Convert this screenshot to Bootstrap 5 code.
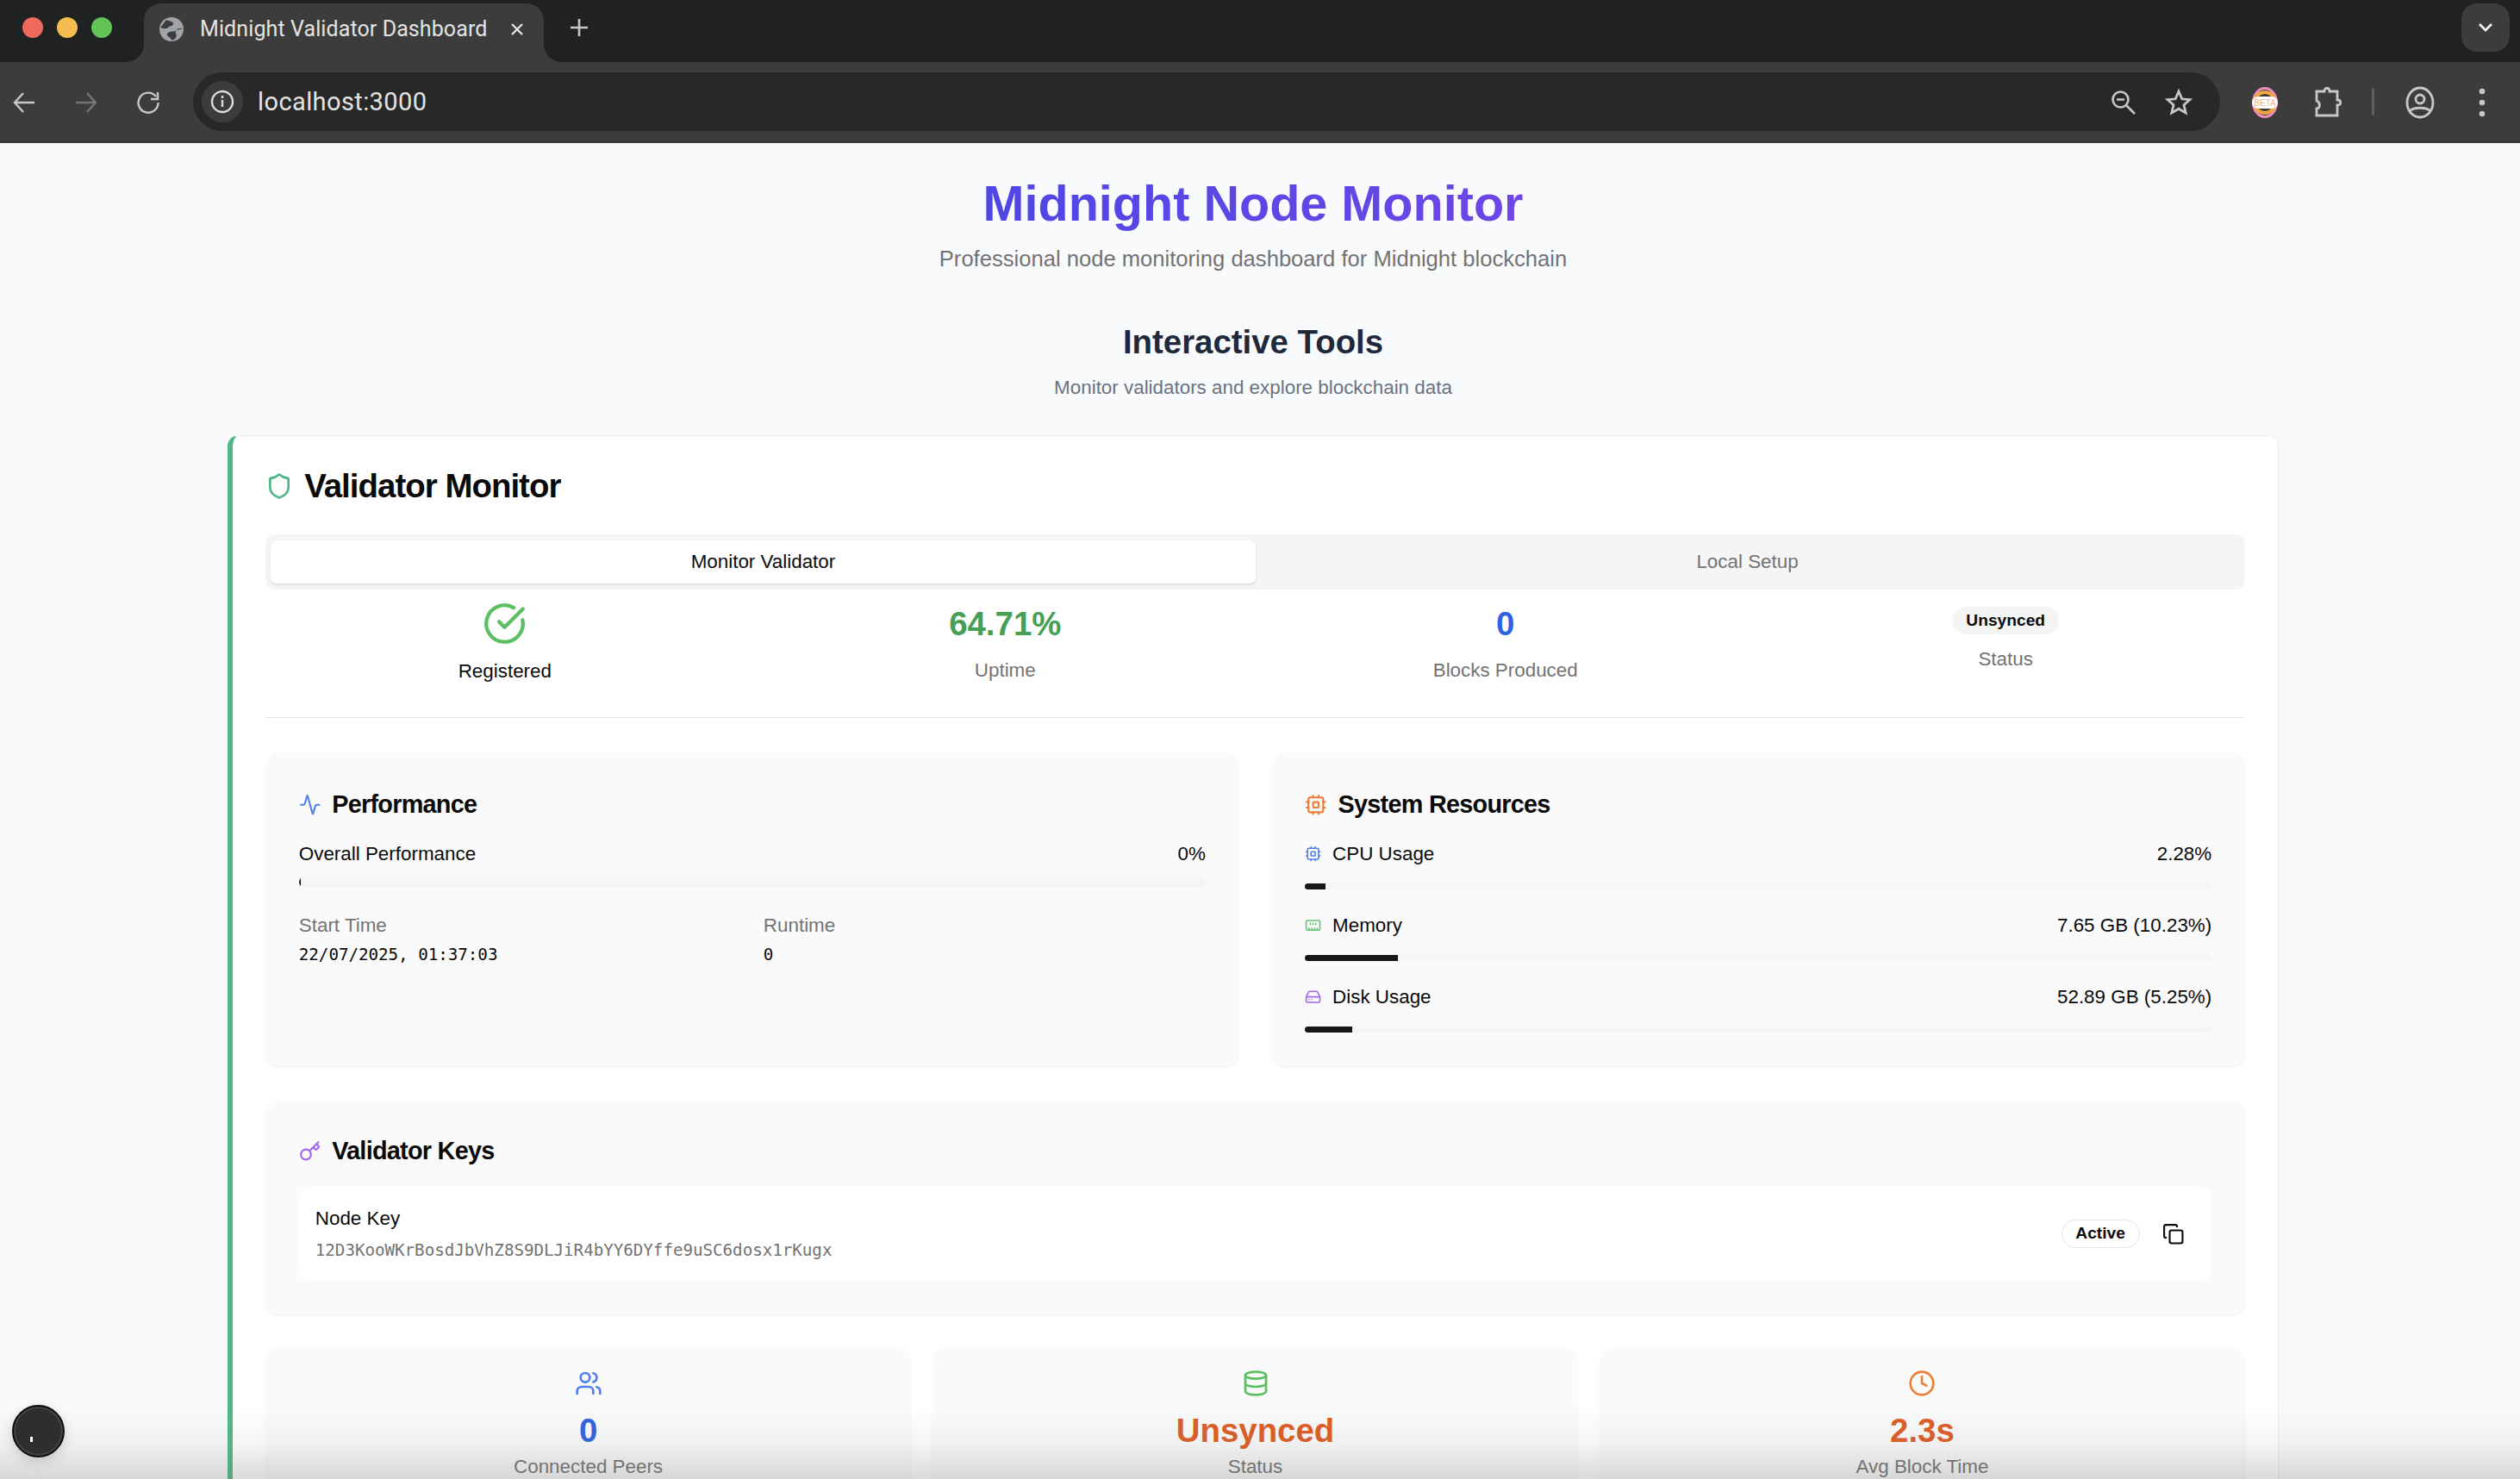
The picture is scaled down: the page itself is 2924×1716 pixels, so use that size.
<!DOCTYPE html>
<html lang="en">
<head>
<meta charset="utf-8">
<title>Midnight Validator Dashboard</title>
<link href="https://cdn.jsdelivr.net/npm/bootstrap@5.3.0/dist/css/bootstrap.min.css" rel="stylesheet">
<style>
html,body{height:1716px;overflow:hidden;margin:0}
body{font-family:"Liberation Sans",Arial,sans-serif;background:#f8fafc;color:#0a0a0a;font-size:22.4px;line-height:1.5}
.win{height:1716px;display:flex;flex-direction:column;position:relative;overflow:hidden}
/* browser chrome */
.strip{height:72px;background:#202221;flex:none;position:relative;font-family:Roboto,sans-serif}
.lights{padding-left:26px;gap:16px;height:64px}
.light{width:24px;height:24px;border-radius:50%}
.tabx{margin:4px 0 0 37px;width:464px;height:68px;background:#3c3c3c;border-radius:20px 20px 0 0;padding-left:18px;color:#e3e3e3;font-size:25px;position:relative}
.tabx::before,.tabx::after{content:"";position:absolute;bottom:0;width:20px;height:20px}
.tabx::before{left:-20px;background:radial-gradient(circle at 0 0,#202221 19.5px,#3c3c3c 20px)}
.tabx::after{right:-20px;background:radial-gradient(circle at 100% 0,#202221 19.5px,#3c3c3c 20px)}
.tabttl{margin-left:19px;white-space:nowrap;letter-spacing:.1px}
.dropbtn{position:absolute;right:12px;top:4px;width:56px;height:56px;border-radius:18px;background:#3c3c3c}
.tools{height:94px;background:#3c3c3c;flex:none;position:relative;font-family:Roboto,sans-serif;padding-left:4px}
.omni{position:absolute;left:224px;top:12px;width:2352px;height:68px;background:#282828;border-radius:34px;padding:0 10px}
.chip{width:48px;height:48px;border-radius:50%;background:#3c3c3c;flex:none}
.url{margin-left:17px;color:#e3e3e3;font-size:29px;letter-spacing:.4px;padding-top:1px}
.abs-ic{position:absolute;top:50%;transform:translate(-50%,-50%)}
.dv{position:absolute;left:2752px;top:30px;width:3px;height:32px;background:#5f5f5f;border-radius:2px}
/* page */
.pg{flex:1;overflow:hidden;background:#f8fafc;padding:0 280px 0 264px}
.h-top{text-align:center;padding-top:35px}
.brand{font-size:57.6px;line-height:70px;font-weight:700;margin:0;background:linear-gradient(90deg,#4f46e5,#6d47e6);-webkit-background-clip:text;background-clip:text;color:transparent;display:inline-block}
.sub{font-size:25.6px;line-height:38px;color:#737373;margin:10px 0 0}
.h2x{font-size:38.4px;line-height:50px;font-weight:700;color:#1e293b;margin:53px 0 0}
.sub2{font-size:22.4px;line-height:32px;color:#6b7280;margin:12px 0 0}
.mon{margin:39px 0 0 0;width:2380px;background:#fff;border:1.6px solid #e9ebee;border-left:6.4px solid #52b788;border-radius:12.8px 12.8px 0 0;padding:0 38.4px;height:1300px}
.mon-h{height:114px;gap:12.8px;padding-top:2px}
.ttl{font-size:38.4px;font-weight:700;letter-spacing:-.96px;margin:0;line-height:1}
.tabsx{height:64px;background:#f5f5f5;border-radius:10px;padding:7px 6px;font-size:22.4px}
.tabsx>div{flex:1 1 0;display:flex;align-items:center;justify-content:center;color:#737373;border-radius:7px}
.tabsx>.on{background:#fff;color:#0a0a0a;box-shadow:0 1.6px 3px rgba(0,0,0,.1)}
.stats{display:grid;grid-template-columns:repeat(4,1fr);gap:25.6px;height:149px;border-bottom:1.6px solid #e8e9eb;text-align:center}
.stat{padding-top:15px}
.bigv{font-size:38.4px;font-weight:700;line-height:48px}
.glab{font-size:22.4px;line-height:32px;color:#737373}
.pill{display:inline-block;background:#f5f5f5;border-radius:18px;font-size:19.2px;font-weight:700;line-height:24px;padding:4px 16px;color:#0a0a0a}
.pair{display:grid;grid-template-columns:1fr 1fr;gap:38.4px;margin-top:40px}
.pnl{background:#fafafa;border-radius:16px;box-shadow:0 1.6px 3px rgba(0,0,0,.05);padding:38.4px}
.pair .pnl{height:364px;padding-top:0}
.pnl-h{height:28.8px;line-height:28.8px;gap:12.8px;font-size:28.8px;font-weight:700;letter-spacing:-.72px;margin:0}
.pair .pnl-h{margin-top:46px}
.rw{font-size:22.4px;line-height:32px}
.trk{background:#f5f5f5;border-radius:7px;overflow:hidden}
.trk>div{background:#171717;height:100%}
.trk-a{height:12.8px}
.trk-b{height:7px}
.gl{color:#737373;line-height:32px}
.mono{font-family:"DejaVu Sans Mono","Liberation Mono",monospace;font-size:19.2px;letter-spacing:-.02px;line-height:28px}
.keybox{background:#fff;border-radius:12.8px;padding:0 19px;height:109px;margin-top:27px}
.act{border:1.6px solid #e5e5e5;border-radius:18px;font-size:19.2px;font-weight:700;height:33px;width:91px;display:flex;align-items:center;justify-content:center}
.tri{display:grid;grid-template-columns:repeat(3,1fr);gap:25.6px;margin-top:39px}
.tri .pnl{padding:23px 0 0;height:300px;text-align:center}
.shade{position:absolute;left:0;right:0;bottom:0;height:82px;background:linear-gradient(180deg,rgba(120,120,120,0),rgba(120,120,120,.08) 50%,rgba(110,110,110,.25));pointer-events:none}
.devb{position:absolute;left:14px;top:1630px;width:61px;height:61px;border-radius:50%;background:#2d2f2e;border:2px solid #0c0c0c;box-shadow:inset 0 0 0 2px #444,0 4px 14px rgba(0,0,0,.15)}
.devb::after{content:"";position:absolute;left:19px;top:35px;width:3px;height:6px;background:#fff}
svg.l{fill:none;stroke:currentColor;stroke-width:2;stroke-linecap:round;stroke-linejoin:round;flex:none}
.tx-grn{color:#52b788}.tx-blue{color:#4f7ff0}.tx-org{color:#ee7d35}.tx-pur{color:#a565f0}
</style>
</head>
<body>
<div class="win">
  <div class="strip d-flex">
    <div class="lights d-flex align-items-center">
      <div class="light" style="background:#ee6a5f"></div>
      <div class="light" style="background:#f5bd4f"></div>
      <div class="light" style="background:#61c454"></div>
    </div>
    <div class="tabx d-flex align-items-center" style="padding-bottom:9px">
      <svg width="28" height="28" viewBox="0 0 28 28" class="flex-none"><circle cx="14" cy="14" r="14" fill="#a0a4a8"/><path d="M8 3c3 2 7 1 8 4s-4 3-6 5-6 1-9 0M27 13c-4-1-7 0-8 3s2 5 0 8l-4 3c-2-2-3-4-5-5s-1-4 2-5 6 0 8-2" fill="#3c3c3c"/></svg>
      <span class="tabttl">Midnight Validator Dashboard</span>
      <svg class="ms-auto" style="margin-right:22px" width="18" height="18" viewBox="0 0 18 18" stroke="#e3e3e3" stroke-width="2.4"><path d="M3 3l12 12M15 3L3 15"/></svg>
    </div>
    <svg style="margin:21px 0 0 30px" width="22" height="22" viewBox="0 0 22 22" stroke="#c7c7c7" stroke-width="2.6"><path d="M11 1v20M1 11h20"/></svg>
    <div class="dropbtn d-flex align-items-center justify-content-center">
      <svg width="20" height="14" viewBox="0 0 20 14" fill="none" stroke="#f0f0f0" stroke-width="2.8"><path d="M3 3l7 7 7-7"/></svg>
    </div>
  </div>
  <div class="tools">
    <svg class="abs-ic" style="left:28px" width="28" height="28" viewBox="0 0 28 28" fill="none" stroke="#c7c7c7" stroke-width="2.4"><path d="M26 14H3M13 3L3 14l10 11"/></svg>
    <svg class="abs-ic" style="left:100px" width="28" height="28" viewBox="0 0 28 28" fill="none" stroke="#757575" stroke-width="2.4"><path d="M2 14h23M15 3l10 11-10 11"/></svg>
    <svg class="abs-ic" style="left:172px" width="28" height="28" viewBox="0 0 28 28" fill="none" stroke="#c7c7c7" stroke-width="2.4"><path d="M23 7a11.500 11.500 0 1 0 2.500 7"/><path d="M25 2v8h-8" stroke-linejoin="miter"/></svg>
    <div class="omni d-flex align-items-center">
      <div class="chip d-flex align-items-center justify-content-center">
        <svg width="28" height="28" viewBox="0 0 28 28" fill="none" stroke="#dedede" stroke-width="2.4"><circle cx="14" cy="14" r="12"/><path d="M14 12v8M14 7v3"/></svg>
      </div>
      <span class="url">localhost:3000</span>
    </div>
    <svg class="abs-ic" style="left:2464px" width="30" height="30" viewBox="0 0 30 30" fill="none" stroke="#c7c7c7" stroke-width="2.600"><circle cx="11.500" cy="11.500" r="9"/><path d="M18 18l10 10M7 11.500h9"/></svg>
    <svg class="abs-ic" style="left:2528px" width="32" height="32" viewBox="0 0 32 32" fill="none" stroke="#c7c7c7" stroke-width="2.800"><path d="M16 3l3.800 8.800 9.200.8-7 6.200 2.100 9.200L16 23.200 7.900 28l2.100-9.200-7-6.200 9.200-.8z"/></svg>
    <svg class="abs-ic" style="left:2628px" width="32" height="38" viewBox="0 0 32 38"><ellipse cx="16" cy="19" rx="15" ry="18" fill="#ee8fc0"/><ellipse cx="16" cy="19" rx="12" ry="15" fill="#3c3c3c"/><ellipse cx="16" cy="19" rx="12" ry="12" fill="none" stroke="#f0a63c" stroke-width="4"/><rect x="1" y="12" width="30" height="14" rx="7" fill="#fff"/><text x="16" y="23" font-size="10" text-anchor="middle" fill="#f5b08a" font-family="Liberation Sans">BETA</text></svg>
    <svg class="abs-ic" style="left:2702px" width="34" height="38" viewBox="0 0 34 38" fill="none" stroke="#c7c7c7" stroke-width="2.800"><path d="M3 6h9c0-5 6-5 6 0h9v10c5 0 5 6 0 6v12H3V26c4 0 5-7 0-9z"/></svg>
    <div class="dv"></div>
    <svg class="abs-ic" style="left:2808px" width="34" height="38" viewBox="0 0 34 38" fill="none" stroke="#c7c7c7" stroke-width="2.800"><ellipse cx="17" cy="19" rx="15" ry="17"/><circle cx="17" cy="15" r="5"/><path d="M5 29c4-5 20-5 24 0"/></svg>
    <svg class="abs-ic" style="left:2880px" width="8" height="34" viewBox="0 0 8 34" fill="#c7c7c7"><circle cx="4" cy="4" r="3.300"/><circle cx="4" cy="17" r="3.300"/><circle cx="4" cy="30" r="3.300"/></svg>
  </div>

  <div class="pg">
    <div class="h-top">
      <h1 class="brand">Midnight Node Monitor</h1>
      <p class="sub">Professional node monitoring dashboard for Midnight blockchain</p>
      <h2 class="h2x">Interactive Tools</h2>
      <p class="sub2">Monitor validators and explore blockchain data</p>
    </div>
    <div class="mon">
      <div class="mon-h d-flex align-items-center">
        <svg class="l tx-grn" width="32" height="32" viewBox="0 0 24 24"><path d="M20 13c0 5-3.500 7.500-7.660 8.950a1 1 0 0 1-.67-.01C7.500 20.500 4 18 4 13V6a1 1 0 0 1 1-1c2 0 4.500-1.200 6.240-2.720a1.170 1.170 0 0 1 1.520 0C14.510 3.810 17 5 19 5a1 1 0 0 1 1 1z"/></svg>
        <h3 class="ttl">Validator Monitor</h3>
      </div>
      <div class="tabsx d-flex">
        <div class="on">Monitor Validator</div>
        <div>Local Setup</div>
      </div>
      <div class="stats">
        <div class="stat" style="padding-top:14px">
          <svg class="l" style="color:#5cbf62" width="51" height="51" viewBox="0 0 24 24"><path d="M21.800 10A10 10 0 1 1 17 3.340"/><path d="m9 11 3 3L22 4"/></svg>
          <div class="rw" style="margin-top:14px;color:#0a0a0a">Registered</div>
        </div>
        <div class="stat" style="padding-top:16px">
          <div class="bigv" style="color:#469f57">64.71%</div>
          <div class="glab" style="margin-top:14px">Uptime</div>
        </div>
        <div class="stat" style="padding-top:16px">
          <div class="bigv" style="color:#2f63e0">0</div>
          <div class="glab" style="margin-top:14px">Blocks Produced</div>
        </div>
        <div class="stat" style="padding-top:18px">
          <span class="pill">Unsynced</span>
          <div class="glab" style="margin-top:13px">Status</div>
        </div>
      </div>

      <div class="pair">
        <div class="pnl">
          <div class="pnl-h d-flex align-items-center">
            <svg class="l tx-blue" width="25.600" height="25.600" viewBox="0 0 24 24"><path d="M22 12h-2.480a2 2 0 0 0-1.930 1.460l-2.350 8.360a.25.25 0 0 1-.48 0L9.240 2.180a.25.25 0 0 0-.48 0l-2.350 8.360A2 2 0 0 1 4.490 12H2"/></svg>
            <span>Performance</span>
          </div>
          <div class="rw d-flex justify-content-between" style="margin-top:27px"><span>Overall Performance</span><span>0%</span></div>
          <div class="trk trk-a" style="margin-top:10px"><div style="width:2px"></div></div>
          <div class="row g-0" style="margin-top:28px">
            <div class="col-6">
              <div class="gl">Start Time</div>
              <div class="mono" style="margin-top:4px">22/07/2025, 01:37:03</div>
            </div>
            <div class="col-6" style="padding-left:13px">
              <div class="gl">Runtime</div>
              <div class="mono" style="margin-top:4px">0</div>
            </div>
          </div>
        </div>
        <div class="pnl">
          <div class="pnl-h d-flex align-items-center">
            <svg class="l tx-org" width="25.600" height="25.600" viewBox="0 0 24 24"><rect x="4" y="4" width="16" height="16" rx="2"/><rect x="9" y="9" width="6" height="6" rx="1"/><path d="M15 2v2M15 20v2M2 15h2M2 9h2M20 15h2M20 9h2M9 2v2M9 20v2"/></svg>
            <span>System Resources</span>
          </div>
          <div class="rw d-flex justify-content-between align-items-center" style="margin-top:27px">
            <span class="d-flex align-items-center" style="gap:12.800px"><svg class="l tx-blue" width="19.200" height="19.200" viewBox="0 0 24 24"><rect x="4" y="4" width="16" height="16" rx="2"/><rect x="9" y="9" width="6" height="6" rx="1"/><path d="M15 2v2M15 20v2M2 15h2M2 9h2M20 15h2M20 9h2M9 2v2M9 20v2"/></svg>CPU Usage</span><span>2.28%</span>
          </div>
          <div class="trk trk-b" style="margin-top:18px"><div style="width:2.28%"></div></div>
          <div class="rw d-flex justify-content-between align-items-center" style="margin-top:26px">
            <span class="d-flex align-items-center" style="gap:12.800px"><svg class="l" style="color:#62c27a" width="19.200" height="19.200" viewBox="0 0 24 24"><path d="M6 19v-3M10 19v-3M14 19v-3M18 19v-3M8 11V9M16 11V9M12 11V9"/><path d="M22 15v-2a2 2 0 0 1 0-2V7a2 2 0 0 0-2-2H4a2 2 0 0 0-2 2v4a2 2 0 0 1 0 2v4a2 2 0 0 0 2 2h16a2 2 0 0 0 2-2z"/></svg>Memory</span><span>7.65 GB (10.23%)</span>
          </div>
          <div class="trk trk-b" style="margin-top:18px"><div style="width:10.23%"></div></div>
          <div class="rw d-flex justify-content-between align-items-center" style="margin-top:26px">
            <span class="d-flex align-items-center" style="gap:12.800px"><svg class="l tx-pur" width="19.200" height="19.200" viewBox="0 0 24 24"><path d="M22 12H2M5.450 5.110 2 12v6a2 2 0 0 0 2 2h16a2 2 0 0 0 2-2v-6l-3.450-6.890A2 2 0 0 0 16.760 4H7.240a2 2 0 0 0-1.790 1.110zM6 16h.01M10 16h.01"/></svg>Disk Usage</span><span>52.89 GB (5.25%)</span>
          </div>
          <div class="trk trk-b" style="margin-top:18px"><div style="width:5.25%"></div></div>
        </div>
      </div>

      <div class="pnl" style="margin-top:40px;height:248px;padding-top:44px">
        <div class="pnl-h d-flex align-items-center">
          <svg class="l tx-pur" width="25.600" height="25.600" viewBox="0 0 24 24"><path d="m15.500 7.500 2.300 2.300a1 1 0 0 0 1.400 0l2.100-2.100a1 1 0 0 0 0-1.400L19 4M21 2l-9.600 9.600"/><circle cx="7.500" cy="15.500" r="5.500"/></svg>
          <span>Validator Keys</span>
        </div>
        <div class="keybox d-flex align-items-center">
          <div>
            <div class="rw">Node Key</div>
            <div class="mono" style="margin-top:7px;color:#737373">12D3KooWKrBosdJbVhZ8S9DLJiR4bYY6DYffe9uSC6dosx1rKugx</div>
          </div>
          <div class="act ms-auto">Active</div>
          <svg class="l" style="margin:0 13px 0 26px;color:#0a0a0a" width="25.600" height="25.600" viewBox="0 0 24 24"><rect x="8" y="8" width="14" height="14" rx="2"/><path d="M4 16c-1.100 0-2-.9-2-2V4c0-1.100.9-2 2-2h10c1.100 0 2 .9 2 2"/></svg>
        </div>
      </div>

      <div class="tri">
        <div class="pnl">
          <svg class="l tx-blue" width="32" height="32" viewBox="0 0 24 24"><path d="M16 21v-2a4 4 0 0 0-4-4H6a4 4 0 0 0-4 4v2"/><circle cx="9" cy="7" r="4"/><path d="M22 21v-2a4 4 0 0 0-3-3.870M16 3.130a4 4 0 0 1 0 7.750"/></svg>
          <div class="bigv" style="color:#2f63e0;margin-top:15px">0</div>
          <div class="glab" style="margin-top:2px">Connected Peers</div>
        </div>
        <div class="pnl">
          <svg class="l" style="color:#5cbf62" width="32" height="32" viewBox="0 0 24 24"><ellipse cx="12" cy="5" rx="9" ry="3"/><path d="M3 5v14a9 3 0 0 0 18 0V5M3 12a9 3 0 0 0 18 0"/></svg>
          <div class="bigv" style="color:#dd5d25;margin-top:15px">Unsynced</div>
          <div class="glab" style="margin-top:2px">Status</div>
        </div>
        <div class="pnl">
          <svg class="l tx-org" width="32" height="32" viewBox="0 0 24 24"><circle cx="12" cy="12" r="10"/><path d="M12 6v6l4 2"/></svg>
          <div class="bigv" style="color:#dd5d25;margin-top:15px">2.3s</div>
          <div class="glab" style="margin-top:2px">Avg Block Time</div>
        </div>
      </div>
    </div>
  </div>
  <div class="shade"></div>
  <div class="devb"></div>
</div>
</body>
</html>
